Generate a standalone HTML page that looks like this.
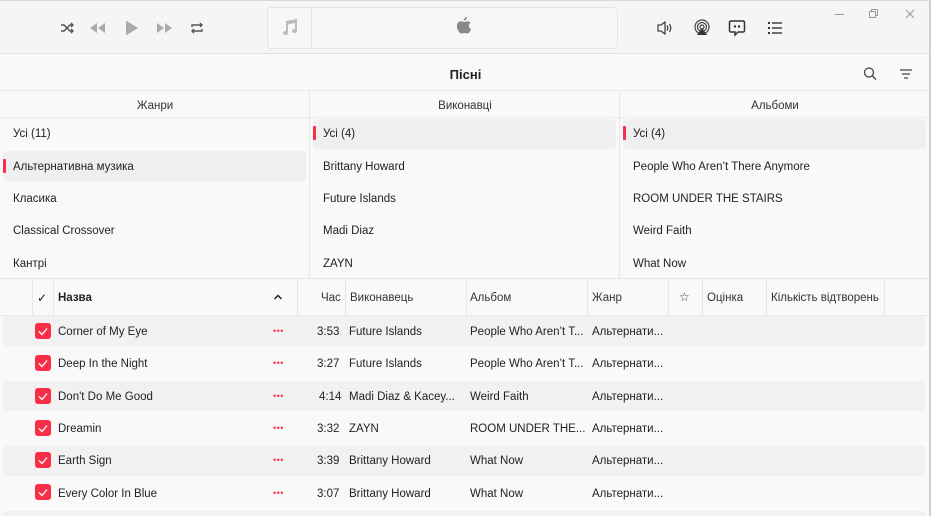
<!DOCTYPE html>
<html style="width:931px;height:516px;overflow:hidden"><head><meta charset="utf-8"><style>
*{margin:0;padding:0;box-sizing:border-box}
body{width:931px;height:516px;overflow:hidden;background:#f9f9f9;font-family:"Liberation Sans",sans-serif;font-size:11.5px;color:#222;position:relative}
.a{position:absolute}
.t{position:absolute;white-space:nowrap;line-height:14px;margin-top:1px}
.hl{position:absolute;background:#efefef;border-radius:4px}
.bar{position:absolute;width:3px;height:14px;background:#fa2d48;border-radius:1px}
.vl{position:absolute;width:1px;background:#e6e6e6}
.hr{position:absolute;height:1px;background:#e4e4e4}
.cb{position:absolute;left:35px;width:16px;height:16px;border-radius:3px;background:#fa2d48}
.dots{position:absolute;left:273px;color:#fa2d48;font-size:9px;letter-spacing:0.5px;line-height:14px;margin-top:2px}
.hd{color:#333}
</style></head><body>
<div class="a" style="left:0;top:0;width:931px;height:53px;background:#f5f5f5;border-top:1px solid #d8d8d8"></div>
<div class="hr" style="left:0;top:53px;width:931px;background:#e2e2e2"></div>
<div class="a" style="left:929px;top:0;width:2px;height:516px;background:#d0d0d0"></div>
<svg class="a" style="left:58px;top:19px" width="160" height="18" viewBox="0 0 160 18">
<g fill="none" stroke="#555" stroke-width="1.4"><path d="M3 6h3l6 6h3M3 12h3l6-6h3"/><path d="M13 4l2 2-2 2M13 10l2 2-2 2"/></g>
<path fill="#aaa" d="M40 9l7-5v10zM32 9l7-5v10z"/>
<path fill="#aaa" d="M68 1.500l12 7.500-12 7.500z"/>
<path fill="#aaa" d="M99 4l7 5-7 5zM107 4l7 5-7 5z"/>
<g fill="none" stroke="#555" stroke-width="1.4"><path d="M134 8v-2h10M142 4l2 2-2 2M144 10v2h-10M136 14l-2-2 2-2"/></g>
</svg>
<div class="a" style="left:267px;top:7px;width:351px;height:42px;border:1px solid #e4e4e4;border-radius:4px;background:#f7f7f7"></div>
<div class="vl" style="left:311px;top:8px;height:40px;background:#e8e8e8"></div>
<svg class="a" style="left:280px;top:18px" width="20" height="20" viewBox="0 0 20 20"><path fill="#bbb" d="M6 3l11-2v12a2.500 2 0 1 1-2-2V5L8 6.500V15a2.500 2 0 1 1-2-2z"/></svg>
<svg class="a" style="left:455px;top:17px" width="18" height="20" viewBox="0 0 18 20"><path fill="#888" d="M12 0c0 2-1.600 3.600-3.300 3.600C8.600 1.800 10.200.2 12 0zM9 5c1.500 0 2.300-.8 3.600-.8 1 0 2.200.5 3 1.600-2.600 1.500-2.200 5.300.4 6.300-.5 1.600-1.700 3.800-3 4.300-1.200.4-1.800-.4-3.500-.4s-2.400.8-3.500.4C4 15.800 1.400 11.500 2 8c.4-2.300 2-3.800 3.700-3.800 1.400 0 2.200.8 3.300.8z"/></svg>
<svg class="a" style="left:656px;top:18px" width="140" height="20" viewBox="0 0 140 20">
<g fill="none" stroke="#444" stroke-width="1.3"><path d="M2 7h3l4-3v12l-4-3H2z"/><path d="M11 7.500q1.500 2.500 0 5M13.500 6q2.500 4 0 8"/></g>
<g fill="none" stroke="#444" stroke-width="1.2"><circle cx="46" cy="9" r="2"/><circle cx="46" cy="9" r="4.500"/><circle cx="46" cy="9" r="7"/></g><path fill="#333" d="M46 10l5 7H41z"/>
<path fill="none" stroke="#333" stroke-width="1.5" d="M75 3h12a1.500 1.500 0 0 1 1.500 1.500v8A1.500 1.500 0 0 1 87 14h-5l-3 3v-3h-4a1.500 1.500 0 0 1-1.500-1.500v-8A1.500 1.500 0 0 1 75 3z"/><circle cx="79" cy="8.500" r="1.200" fill="#333"/><circle cx="83" cy="8.500" r="1.200" fill="#333"/>
<g fill="#333"><rect x="112" y="4" width="2" height="2"/><rect x="112" y="9" width="2" height="2"/><rect x="112" y="14" width="2" height="2"/><rect x="116" y="4.300" width="10" height="1.400"/><rect x="116" y="9.300" width="10" height="1.400"/><rect x="116" y="14.300" width="10" height="1.400"/></g>
</svg>
<svg class="a" style="left:830px;top:6px" width="90" height="16" viewBox="0 0 90 16">
<path stroke="#999" d="M5 8.500h9" /><g fill="none" stroke="#999"><rect x="39.500" y="5.500" width="6" height="6"/><path d="M41.500 5.500V3.500h6v6h-2"/></g><path stroke="#999" d="M76 4l8 8M84 4l-8 8"/>
</svg>
<div class="t" style="left:0;width:931px;top:67px;text-align:center;font-weight:bold;font-size:13px">Пісні</div>
<svg class="a" style="left:862px;top:66px" width="50" height="16" viewBox="0 0 50 16"><g fill="none" stroke="#444" stroke-width="1.3"><circle cx="7" cy="6.500" r="4.500"/><path d="M10.300 9.800L14 13.500"/><path d="M38 4h12M40 8h8M42 12h4"/></g></svg>
<div class="hr" style="left:0;top:90px;width:929px;background:#e8e8e8"></div>
<div class="t hd" style="left:0;width:310px;top:98px;text-align:center">Жанри</div>
<div class="t hd" style="left:310px;width:310px;top:98px;text-align:center">Виконавці</div>
<div class="t hd" style="left:620px;width:310px;top:98px;text-align:center">Альбоми</div>
<div class="hr" style="left:0;top:117px;width:929px;background:#ececec"></div>
<div class="vl" style="left:309px;top:91px;height:187px"></div>
<div class="vl" style="left:619px;top:91px;height:187px"></div>
<div class="hl" style="left:3px;top:151px;width:303px;height:30px"></div>
<div class="bar" style="left:3px;top:159px"></div>
<div class="hl" style="left:313px;top:119px;width:303px;height:30px"></div>
<div class="bar" style="left:313px;top:126px"></div>
<div class="hl" style="left:623px;top:119px;width:303px;height:30px"></div>
<div class="bar" style="left:623px;top:126px"></div>
<div class="t" style="left:13px;top:126px">Усі (11)</div>
<div class="t" style="left:13px;top:159px">Альтернативна музика</div>
<div class="t" style="left:13px;top:191px">Класика</div>
<div class="t" style="left:13px;top:223px">Classical Crossover</div>
<div class="t" style="left:13px;top:256px">Кантрі</div>
<div class="t" style="left:323px;top:126px">Усі (4)</div>
<div class="t" style="left:323px;top:159px">Brittany Howard</div>
<div class="t" style="left:323px;top:191px">Future Islands</div>
<div class="t" style="left:323px;top:223px">Madi Diaz</div>
<div class="t" style="left:323px;top:256px">ZAYN</div>
<div class="t" style="left:633px;top:126px">Усі (4)</div>
<div class="t" style="left:633px;top:159px">People Who Aren’t There Anymore</div>
<div class="t" style="left:633px;top:191px">ROOM UNDER THE STAIRS</div>
<div class="t" style="left:633px;top:223px">Weird Faith</div>
<div class="t" style="left:633px;top:256px">What Now</div>
<div class="hr" style="left:0;top:278px;width:929px"></div>
<div class="vl" style="left:32px;top:279px;height:36px"></div>
<div class="vl" style="left:53px;top:279px;height:36px"></div>
<div class="vl" style="left:297px;top:279px;height:36px"></div>
<div class="vl" style="left:345px;top:279px;height:36px"></div>
<div class="vl" style="left:466px;top:279px;height:36px"></div>
<div class="vl" style="left:587px;top:279px;height:36px"></div>
<div class="vl" style="left:668px;top:279px;height:36px"></div>
<div class="vl" style="left:702px;top:279px;height:36px"></div>
<div class="vl" style="left:766px;top:279px;height:36px"></div>
<div class="vl" style="left:884px;top:279px;height:36px"></div>
<div class="hr" style="left:0;top:315px;width:929px;background:#eaeaea"></div>
<div class="t" style="left:37px;top:290px;font-size:12px">✓</div>
<div class="t" style="left:58px;top:290px;font-weight:bold">Назва</div>
<svg class="a" style="left:273px;top:293px" width="10" height="8"><path d="M1.500 6L5 2.500 8.500 6" fill="none" stroke="#222" stroke-width="1.500"/></svg>
<div class="t hd" style="left:321px;top:290px">Час</div>
<div class="t hd" style="left:350px;top:290px">Виконавець</div>
<div class="t hd" style="left:470px;top:290px">Альбом</div>
<div class="t hd" style="left:592px;top:290px">Жанр</div>
<div class="t hd" style="left:679px;top:289px;font-size:12px">☆</div>
<div class="t hd" style="left:707px;top:290px">Оцінка</div>
<div class="t hd" style="left:771px;top:290px">Кількість відтворень</div>
<div class="hl" style="left:3px;top:316px;width:923px;height:30px;background:#f1f1f1"></div>
<div class="hl" style="left:3px;top:381px;width:923px;height:30px;background:#f1f1f1"></div>
<div class="hl" style="left:3px;top:446px;width:923px;height:30px;background:#f1f1f1"></div>
<div class="hl" style="left:3px;top:511px;width:923px;height:5px;background:#f1f1f1;border-radius:4px 4px 0 0"></div>

<div class="cb" style="top:323px"><svg width="16" height="16"><path d="M4 8.500l3 3 5-6" fill="none" stroke="#fff" stroke-width="1.300"/></svg></div>
<div class="t" style="left:58px;top:324px">Corner of My Eye</div><div class="dots" style="top:322px">•••</div>
<div class="t" style="left:317px;top:324px">3:53</div><div class="t" style="left:349px;top:324px">Future Islands</div><div class="t" style="left:470px;top:324px">People Who Aren’t T...</div><div class="t" style="left:592px;top:324px">Альтернати...</div>

<div class="cb" style="top:355px"><svg width="16" height="16"><path d="M4 8.500l3 3 5-6" fill="none" stroke="#fff" stroke-width="1.300"/></svg></div>
<div class="t" style="left:58px;top:356px">Deep In the Night</div><div class="dots" style="top:354px">•••</div>
<div class="t" style="left:317px;top:356px">3:27</div><div class="t" style="left:349px;top:356px">Future Islands</div><div class="t" style="left:470px;top:356px">People Who Aren’t T...</div><div class="t" style="left:592px;top:356px">Альтернати...</div>

<div class="cb" style="top:388px"><svg width="16" height="16"><path d="M4 8.500l3 3 5-6" fill="none" stroke="#fff" stroke-width="1.300"/></svg></div>
<div class="t" style="left:58px;top:389px">Don't Do Me Good</div><div class="dots" style="top:387px">•••</div>
<div class="t" style="left:319px;top:389px">4:14</div><div class="t" style="left:349px;top:389px">Madi Diaz &amp; Kacey...</div><div class="t" style="left:470px;top:389px">Weird Faith</div><div class="t" style="left:592px;top:389px">Альтернати...</div>

<div class="cb" style="top:420px"><svg width="16" height="16"><path d="M4 8.500l3 3 5-6" fill="none" stroke="#fff" stroke-width="1.300"/></svg></div>
<div class="t" style="left:58px;top:421px">Dreamin</div><div class="dots" style="top:419px">•••</div>
<div class="t" style="left:317px;top:421px">3:32</div><div class="t" style="left:349px;top:421px">ZAYN</div><div class="t" style="left:470px;top:421px">ROOM UNDER THE...</div><div class="t" style="left:592px;top:421px">Альтернати...</div>

<div class="cb" style="top:452px"><svg width="16" height="16"><path d="M4 8.500l3 3 5-6" fill="none" stroke="#fff" stroke-width="1.300"/></svg></div>
<div class="t" style="left:58px;top:453px">Earth Sign</div><div class="dots" style="top:451px">•••</div>
<div class="t" style="left:317px;top:453px">3:39</div><div class="t" style="left:349px;top:453px">Brittany Howard</div><div class="t" style="left:470px;top:453px">What Now</div><div class="t" style="left:592px;top:453px">Альтернати...</div>

<div class="cb" style="top:484px"><svg width="16" height="16"><path d="M4 8.500l3 3 5-6" fill="none" stroke="#fff" stroke-width="1.300"/></svg></div>
<div class="t" style="left:58px;top:486px">Every Color In Blue</div><div class="dots" style="top:484px">•••</div>
<div class="t" style="left:317px;top:486px">3:07</div><div class="t" style="left:349px;top:486px">Brittany Howard</div><div class="t" style="left:470px;top:486px">What Now</div><div class="t" style="left:592px;top:486px">Альтернати...</div>
</body></html>
